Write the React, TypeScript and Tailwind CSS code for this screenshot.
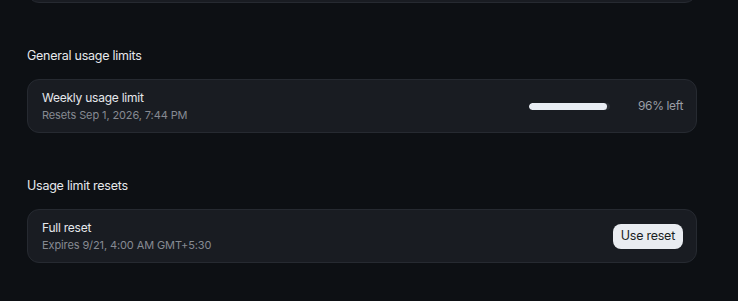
export default function App() {
  return (
    <div className="min-h-[301px] w-full overflow-hidden bg-[#0d1014] pl-[27px] pr-[41px] font-['Inter',sans-serif] text-[#e8eaee]">
      <div className="-mt-[50px] h-[53px] rounded-xl border border-[#262a31] bg-[#191c22]" />

      <h2 className="mt-[43px] text-[12.5px] leading-5 tracking-[-0.02em] text-[#e6e8ec]">General usage limits</h2>
      <div className="mt-[13px] flex h-[54px] items-center justify-between rounded-xl border border-[#262a31] bg-[#191c22] pl-[14px] pr-[13px]">
        <div>
          <div className="text-[12px] leading-[18px] tracking-[-0.02em] text-[#e6e8ec]">Weekly usage limit</div>
          <div className="text-[11px] leading-[16px] tracking-[-0.01em] text-[#868a92]">Resets Sep 1, 2026, 7:44 PM</div>
        </div>
        <div className="flex items-center gap-[28px]">
          <div className="h-[7px] w-[81px] overflow-hidden rounded-full bg-[#2b2f36]">
            <div className="h-full rounded-full bg-[#e9edf4]" style={{ width: "96%" }} />
          </div>
          <div className="text-[12px] tracking-[-0.03em] text-[#9a9ea6]">96% left</div>
        </div>
      </div>

      <h2 className="mt-[43px] text-[12.5px] leading-5 tracking-[-0.02em] text-[#e6e8ec]">Usage limit resets</h2>
      <div className="mt-[13px] flex h-[54px] items-center justify-between rounded-xl border border-[#262a31] bg-[#191c22] pl-[14px] pr-[13px]">
        <div>
          <div className="text-[12px] leading-[18px] tracking-[-0.02em] text-[#e6e8ec]">Full reset</div>
          <div className="text-[11px] leading-[16px] tracking-[-0.01em] text-[#868a92]">Expires 9/21, 4:00 AM GMT+5:30</div>
        </div>
        <button className="h-[25px] rounded-lg bg-[#e9ecf1] px-[8px] text-[12.5px] tracking-[-0.02em] text-[#1a1d22]">Use reset</button>
      </div>
    </div>
  );
}
